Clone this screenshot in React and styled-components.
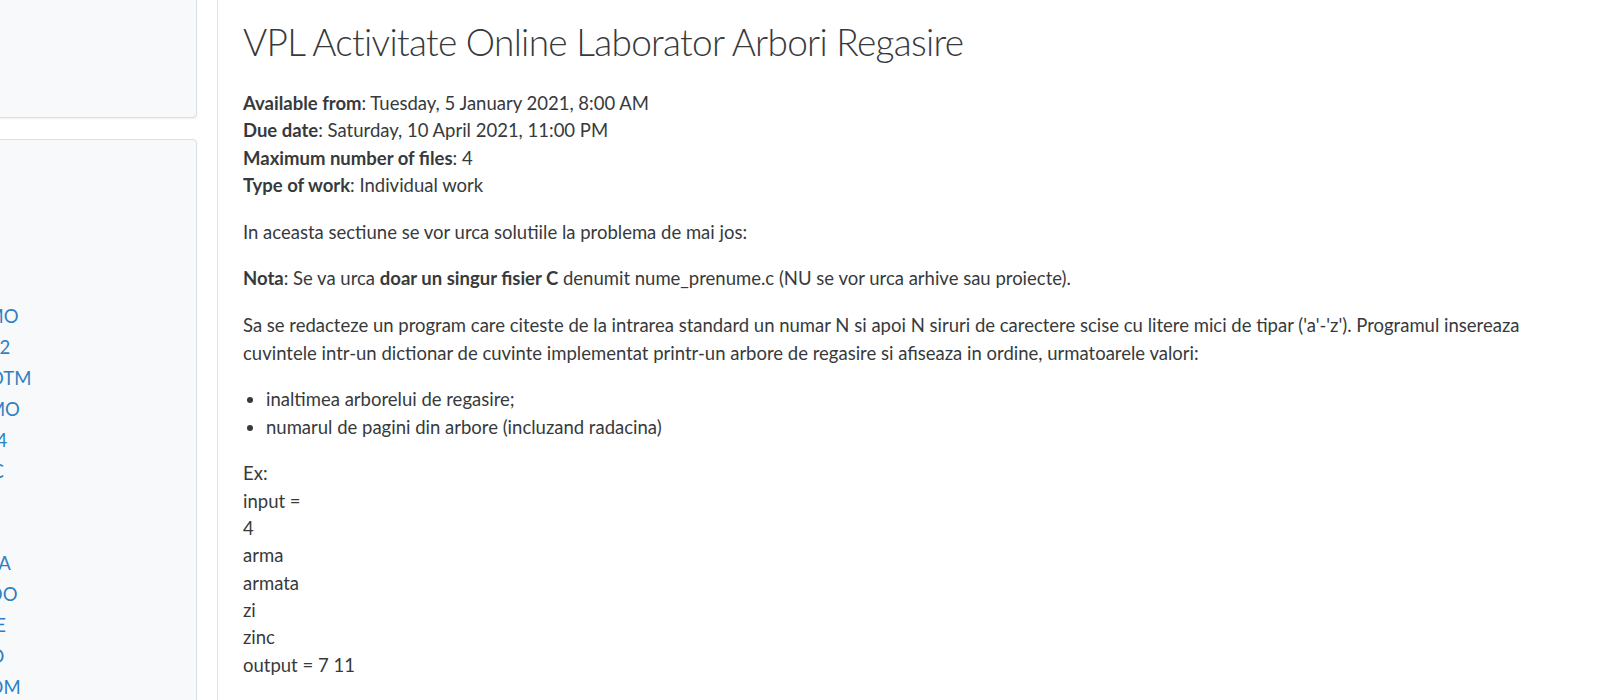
import React from "react";
import styled, { createGlobalStyle } from "styled-components";

const GlobalStyle = createGlobalStyle`
  html, body { margin: 0; padding: 0; background: #ffffff; }
  body {
    font-family: Lato, "Open Sans", "Noto Sans", sans-serif;
    color: #373a3c;
    overflow: hidden;
  }
`;

const Page = styled.div`
  display: flex;
  width: 1600px;
  height: 700px;
  overflow: hidden;
`;

const Sidebar = styled.aside`
  flex: 0 0 477px;
  margin-left: -260px;
  margin-top: -61px;
  display: flex;
  flex-direction: column;
  gap: 21px;
  padding-right: 20px;
  box-sizing: border-box;
`;

const Card = styled.section`
  flex-shrink: 0;
  background: #f8f9fa;
  border: 1px solid #dcdfe3;
  border-radius: 4px;
  box-shadow: 0 1px 2px rgba(0, 0, 0, 0.07);
  height: ${(p) => p.$height}px;
  padding: 0 20px;
  box-sizing: border-box;
  overflow: hidden;
`;

const CourseList = styled.ul`
  list-style: none;
  margin: 0;
  padding: 161px 0 0;
`;

const CourseLink = styled.li`
  font-size: 18.5px;
  line-height: 30.9px;
  color: #2f7fc4;
  white-space: nowrap;
  text-transform: uppercase;
`;

const Main = styled.main`
  flex: 1;
  border-left: 1px solid #e2e4e7;
  padding: 20px 25px 0 25px;
  box-sizing: border-box;
`;

const Title = styled.h2`
  font-size: 37px;
  font-weight: 300;
  letter-spacing: -0.7px;
  line-height: 44px;
  margin: 0 0 26px;
  color: #373a3c;
`;

const Meta = styled.div`
  margin-bottom: 19.5px;
`;

const Text = styled.p`
  font-size: 18.5px;
  line-height: 27.3px;
  margin: 0 0 19.5px;
`;

const MetaLine = styled.div`
  font-size: 18.5px;
  line-height: 27.3px;
`;

const Bullets = styled.ul`
  margin: 0 0 19.5px;
  padding-left: 23px;
  font-size: 18.5px;
  line-height: 27.3px;
`;

const Example = styled.div`
  font-size: 18.5px;
  line-height: 27.3px;
`;

const courses = [
  "Algoritmi paraleli I demo",
  "Structuri de date anul 2",
  "Programare avansat POTM",
  "Metode numerice O demo",
  "Baze de date BI 2020-2024",
  "Retele de calculatori IC",
  "Logica",
  "Grafica",
  "Sisteme de operare SI 2 IA",
  "Ingineria programarii DO",
  "Analiza numerica MNI SE",
  "Tehnic web anul I 2021 D",
  "Calculatoare anul 1 DOM",
];

const meta = [
  ["Available from", "Tuesday, 5 January 2021, 8:00 AM"],
  ["Due date", "Saturday, 10 April 2021, 11:00 PM"],
  ["Maximum number of files", "4"],
  ["Type of work", "Individual work"],
];

const example = ["Ex:", "input =", "4", "arma", "armata", "zi", "zinc", "output = 7 11"];

export default function App() {
  return (
    <>
      <GlobalStyle />
      <Page>
        <Sidebar>
          <Card $height={179} />
          <Card $height={700}>
            <CourseList>
              {courses.map((c) => (
                <CourseLink key={c}>{c}</CourseLink>
              ))}
            </CourseList>
          </Card>
        </Sidebar>
        <Main>
          <Title>VPL Activitate Online Laborator Arbori Regasire</Title>
          <Meta>
            {meta.map(([k, v]) => (
              <MetaLine key={k}>
                <strong>{k}</strong>: {v}
              </MetaLine>
            ))}
          </Meta>
          <Text>In aceasta sectiune se vor urca solutiile la problema de mai jos:</Text>
          <Text>
            <strong>Nota</strong>: Se va urca <strong>doar un singur fisier C</strong> denumit
            nume_prenume.c (NU se vor urca arhive sau proiecte).
          </Text>
          <Text>
            Sa se redacteze un program care citeste de la intrarea standard un numar N si apoi N
            siruri de carectere scise cu litere mici de tipar ('a'-'z'). Programul insereaza
            cuvintele intr-un dictionar de cuvinte implementat printr-un arbore de regasire si
            afiseaza in ordine, urmatoarele valori:
          </Text>
          <Bullets>
            <li>inaltimea arborelui de regasire;</li>
            <li>numarul de pagini din arbore (incluzand radacina)</li>
          </Bullets>
          <Example>
            {example.map((l, i) => (
              <div key={i}>{l}</div>
            ))}
          </Example>
        </Main>
      </Page>
    </>
  );
}
